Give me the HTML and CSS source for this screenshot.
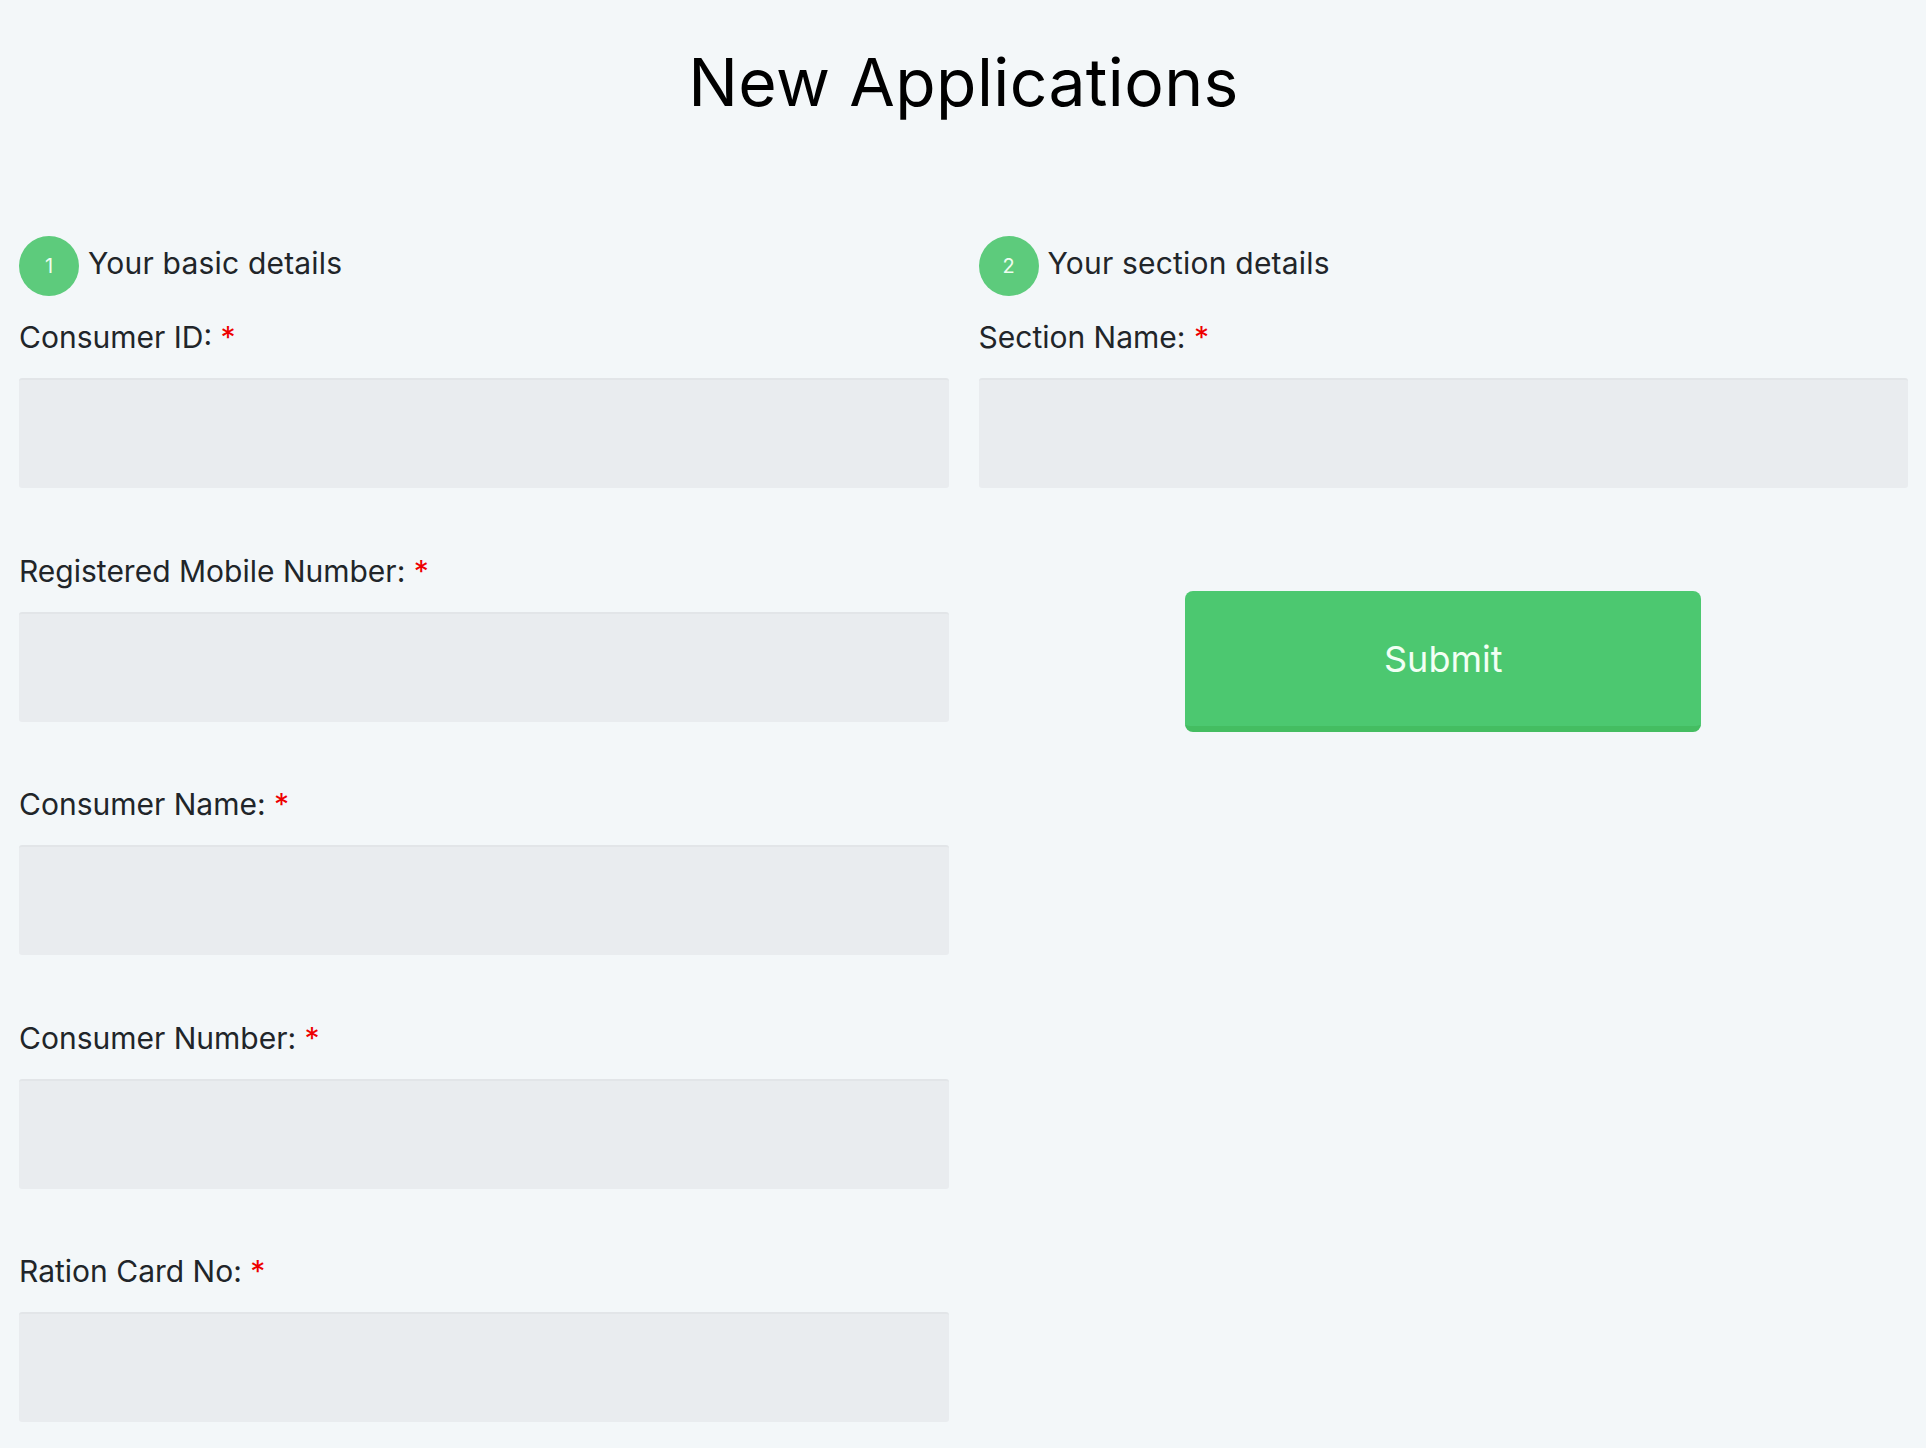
FILE: index.html
```html
<!DOCTYPE html>
<html lang="en">
<head>
<meta charset="utf-8">
<title>New Applications</title>
<link rel="stylesheet" href="styles.css">
</head>
<body>
<main class="page">
  <h1 class="title">New Applications</h1>
  <div class="columns">
    <section class="col">
      <div class="step"><span class="step-num">1</span><span class="step-title">Your basic details</span></div>
      <div class="field">
        <label class="label" for="cid">Consumer ID: <span class="req">*</span></label>
        <input class="input" id="cid" type="text">
      </div>
      <div class="field">
        <label class="label" for="mob">Registered Mobile Number: <span class="req">*</span></label>
        <input class="input" id="mob" type="text">
      </div>
      <div class="field">
        <label class="label" for="cname">Consumer Name: <span class="req">*</span></label>
        <input class="input" id="cname" type="text">
      </div>
      <div class="field">
        <label class="label" for="cnum">Consumer Number: <span class="req">*</span></label>
        <input class="input" id="cnum" type="text">
      </div>
      <div class="field">
        <label class="label" for="ration">Ration Card No: <span class="req">*</span></label>
        <input class="input" id="ration" type="text">
      </div>
    </section>
    <section class="col">
      <div class="step"><span class="step-num">2</span><span class="step-title">Your section details</span></div>
      <div class="field">
        <label class="label" for="sec">Section Name: <span class="req">*</span></label>
        <input class="input" id="sec" type="text">
      </div>
      <div class="actions">
        <button class="submit" type="button">Submit</button>
      </div>
    </section>
  </div>
</main>
</body>
</html>
```

FILE: styles.css
```css
* { box-sizing: border-box; }
html, body {
  margin: 0;
  padding: 0;
  background: #f3f7f9;
}
body {
  font-family: Inter, "Noto Sans", "DejaVu Sans", sans-serif;
  color: #212529;
}
.page {
  padding: 0 18px 0 19px;
}
.title {
  margin: 0;
  padding-top: 44px;
  font-size: 66px;
  line-height: 77px;
  font-weight: 400;
  letter-spacing: 0.4px;
  color: #000;
  text-align: center;
}
.columns {
  display: grid;
  grid-template-columns: 1fr 1fr;
  column-gap: 30px;
  margin-top: 115px;
}
.step {
  display: flex;
  align-items: center;
  gap: 9px;
  height: 60px;
}
.step-num {
  width: 60px;
  height: 60px;
  border-radius: 50%;
  background: #5dcb7c;
  color: #eefdf0;
  font-size: 20px;
  display: flex;
  align-items: center;
  justify-content: center;
  flex-shrink: 0;
}
.step-title {
  font-size: 30px;
  line-height: 45px;
  letter-spacing: 0.2px;
  padding-bottom: 6px;
}
.field {
  margin-top: 19px;
}
.field + .field {
  margin-top: 60.5px;
}
.label {
  display: block;
  font-size: 30px;
  line-height: 45px;
  margin-bottom: 18px;
}
.req {
  color: #e00;
}
.input {
  display: block;
  width: 100%;
  height: 110px;
  border: none;
  border-top: 2px solid #e2e5e8;
  border-radius: 3px;
  background: #e9ecef;
  font: inherit;
  outline: none;
}
.actions {
  display: flex;
  justify-content: center;
  margin-top: 103px;
}
.submit {
  width: 516px;
  height: 141px;
  border: none;
  border-bottom: 6px solid #44bd61;
  border-radius: 8px;
  background: #4cc870;
  color: #f2fff4;
  font-family: inherit;
  font-size: 36px;
  padding: 0;
}
```
